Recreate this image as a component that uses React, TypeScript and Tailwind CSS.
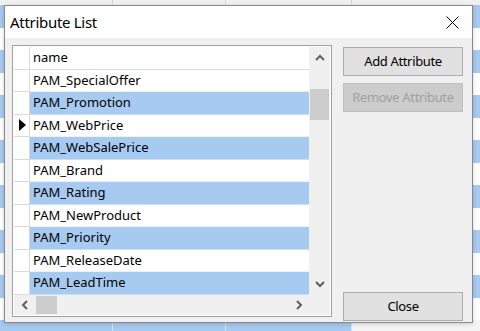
const names = [
  "PAM_SpecialOffer",
  "PAM_Promotion",
  "PAM_WebPrice",
  "PAM_WebSalePrice",
  "PAM_Brand",
  "PAM_Rating",
  "PAM_NewProduct",
  "PAM_Priority",
  "PAM_ReleaseDate",
  "PAM_LeadTime",
];

const bgRows = Array.from({ length: 15 }, (_, i) => i);

function Chevron({ dir }: { dir: "up" | "down" | "left" | "right" }) {
  const pts = {
    up: "1,6 5,2 9,6",
    down: "1,2 5,6 9,2",
    left: "6,1 2,5 6,9",
    right: "2,1 6,5 2,9",
  }[dir];
  const vertical = dir === "up" || dir === "down";
  return (
    <svg width={vertical ? 10 : 8} height={vertical ? 8 : 10} viewBox={vertical ? "0 0 10 8" : "0 0 8 10"}>
      <polyline points={pts} fill="none" stroke="#606060" strokeWidth="2" />
    </svg>
  );
}

function Backdrop() {
  return (
    <div className="flex flex-col">
      <div className="flex h-[5px] bg-[#f0f0f0]">
        <div className="w-[113px] border-r border-[#d4d4d4]" />
        <div className="w-[113px] border-r border-[#d4d4d4]" />
        <div className="w-[126px] border-r border-[#d4d4d4]" />
        <div className="flex-1" />
      </div>
      {bgRows.map((i) => {
        const blue = i % 2 === 0;
        const last = i === bgRows.length - 1;
        return (
          <div key={i} className={`flex h-[22.5px] ${blue ? "bg-[#a6caf0]" : "bg-white"}`}>
            <div className="w-[113px] border-r border-[#e0e0e0]" />
            <div className="w-[113px] border-r border-[#e0e0e0]" />
            <div className="w-[126px] border-r border-[#e0e0e0]" />
            <div className={`flex-1 ${last ? "bg-[#f4f4f4]" : ""}`} />
          </div>
        );
      })}
    </div>
  );
}

function Grid() {
  return (
    <div className="h-[272px] w-[320px] border border-[#a0a0a0] bg-white p-px">
      <div className="flex h-full">
        <div className="flex w-[295px] flex-col">
          <div className="flex h-[247.5px]">
            <div className="flex w-[16px] flex-col border-r border-[#d9d9d9]">
              <div className="h-[22.5px] border-b border-[#d9d9d9]" />
              {names.map((n, i) => (
                <div key={n} className="flex h-[22.5px] items-center justify-center border-b border-[#d9d9d9] pl-px">
                  {i === 2 && (
                    <svg width="7" height="12" viewBox="0 0 7 12">
                      <polygon points="0,0 7,6 0,12" fill="#000" />
                    </svg>
                  )}
                </div>
              ))}
            </div>
            <div className="flex w-[279px] flex-col text-[13px] text-black">
              <div className="flex h-[22.5px] items-center border-b border-[#dcdcdc] pl-[3px]">name</div>
              {names.map((n, i) => (
                <div
                  key={n}
                  className={`flex h-[22.5px] items-center border-b pl-[3px] ${
                    i % 2 === 1 ? "border-[#c9dff6] bg-[#a6caf0]" : "border-[#f0f0f0] bg-white"
                  }`}
                >
                  {n}
                </div>
              ))}
            </div>
          </div>
          <div className="flex h-[20.5px] items-stretch bg-[#f0f0f0]">
            <div className="flex w-[20px] items-center justify-center pl-[2px]">
              <Chevron dir="left" />
            </div>
            <div className="my-px ml-[2px] w-[21px] bg-[#cdcdcd]" />
            <div className="flex-1" />
            <div className="flex w-[20px] items-center justify-center">
              <Chevron dir="right" />
            </div>
          </div>
        </div>
        <div className="flex w-[21px] flex-col">
          <div className="flex h-[247.5px] flex-col bg-[#f0f0f0]">
            <div className="flex h-[22px] items-center justify-center">
              <Chevron dir="up" />
            </div>
            <div className="mx-px mt-[20px] h-[31px] bg-[#cdcdcd]" />
            <div className="flex-1" />
            <div className="flex h-[22px] items-center justify-center">
              <Chevron dir="down" />
            </div>
          </div>
          <div className="flex-1 bg-[#f0f0f0]" />
        </div>
      </div>
    </div>
  );
}

function Button({ label, disabled }: { label: string; disabled?: boolean }) {
  return (
    <button
      className={`flex h-[29px] w-[120px] items-center justify-center border text-[13px] tracking-[-0.35px] ${
        disabled ? "border-[#bfbfbf] bg-[#cccccc] text-[#a0a0a0]" : "border-[#adadad] bg-[#e1e1e1] text-black"
      }`}
    >
      {label}
    </button>
  );
}

export default function App() {
  return (
    <div className="relative h-[331px] w-[480px] overflow-hidden bg-white font-['Noto_Sans',sans-serif]">
      <Backdrop />
      <div className="absolute left-[4px] top-[5px] flex h-[318px] w-[469px] flex-col border border-[#8a8a8a] bg-[#f0f0f0] shadow-[0_1px_4px_rgba(0,0,0,0.18)]">
        <div className="flex h-[32px] items-center justify-between bg-white pl-[5px] pr-[13px]">
          <span className="text-[15px] tracking-[-0.3px] text-black">Attribute List</span>
          <svg width="13" height="13" viewBox="0 0 13 13">
            <path d="M0.5 0.5 L12.5 12.5 M12.5 0.5 L0.5 12.5" stroke="#000" strokeWidth="1" />
          </svg>
        </div>
        <div className="flex flex-1 pl-[7px] pt-[7px]">
          <Grid />
          <div className="ml-[11px] flex flex-col pb-px pt-[2px]">
            <Button label="Add Attribute" />
            <div className="mt-[7px]">
              <Button label="Remove Attribute" disabled />
            </div>
            <div className="mt-auto">
              <Button label="Close" />
            </div>
          </div>
        </div>
      </div>
    </div>
  );
}
